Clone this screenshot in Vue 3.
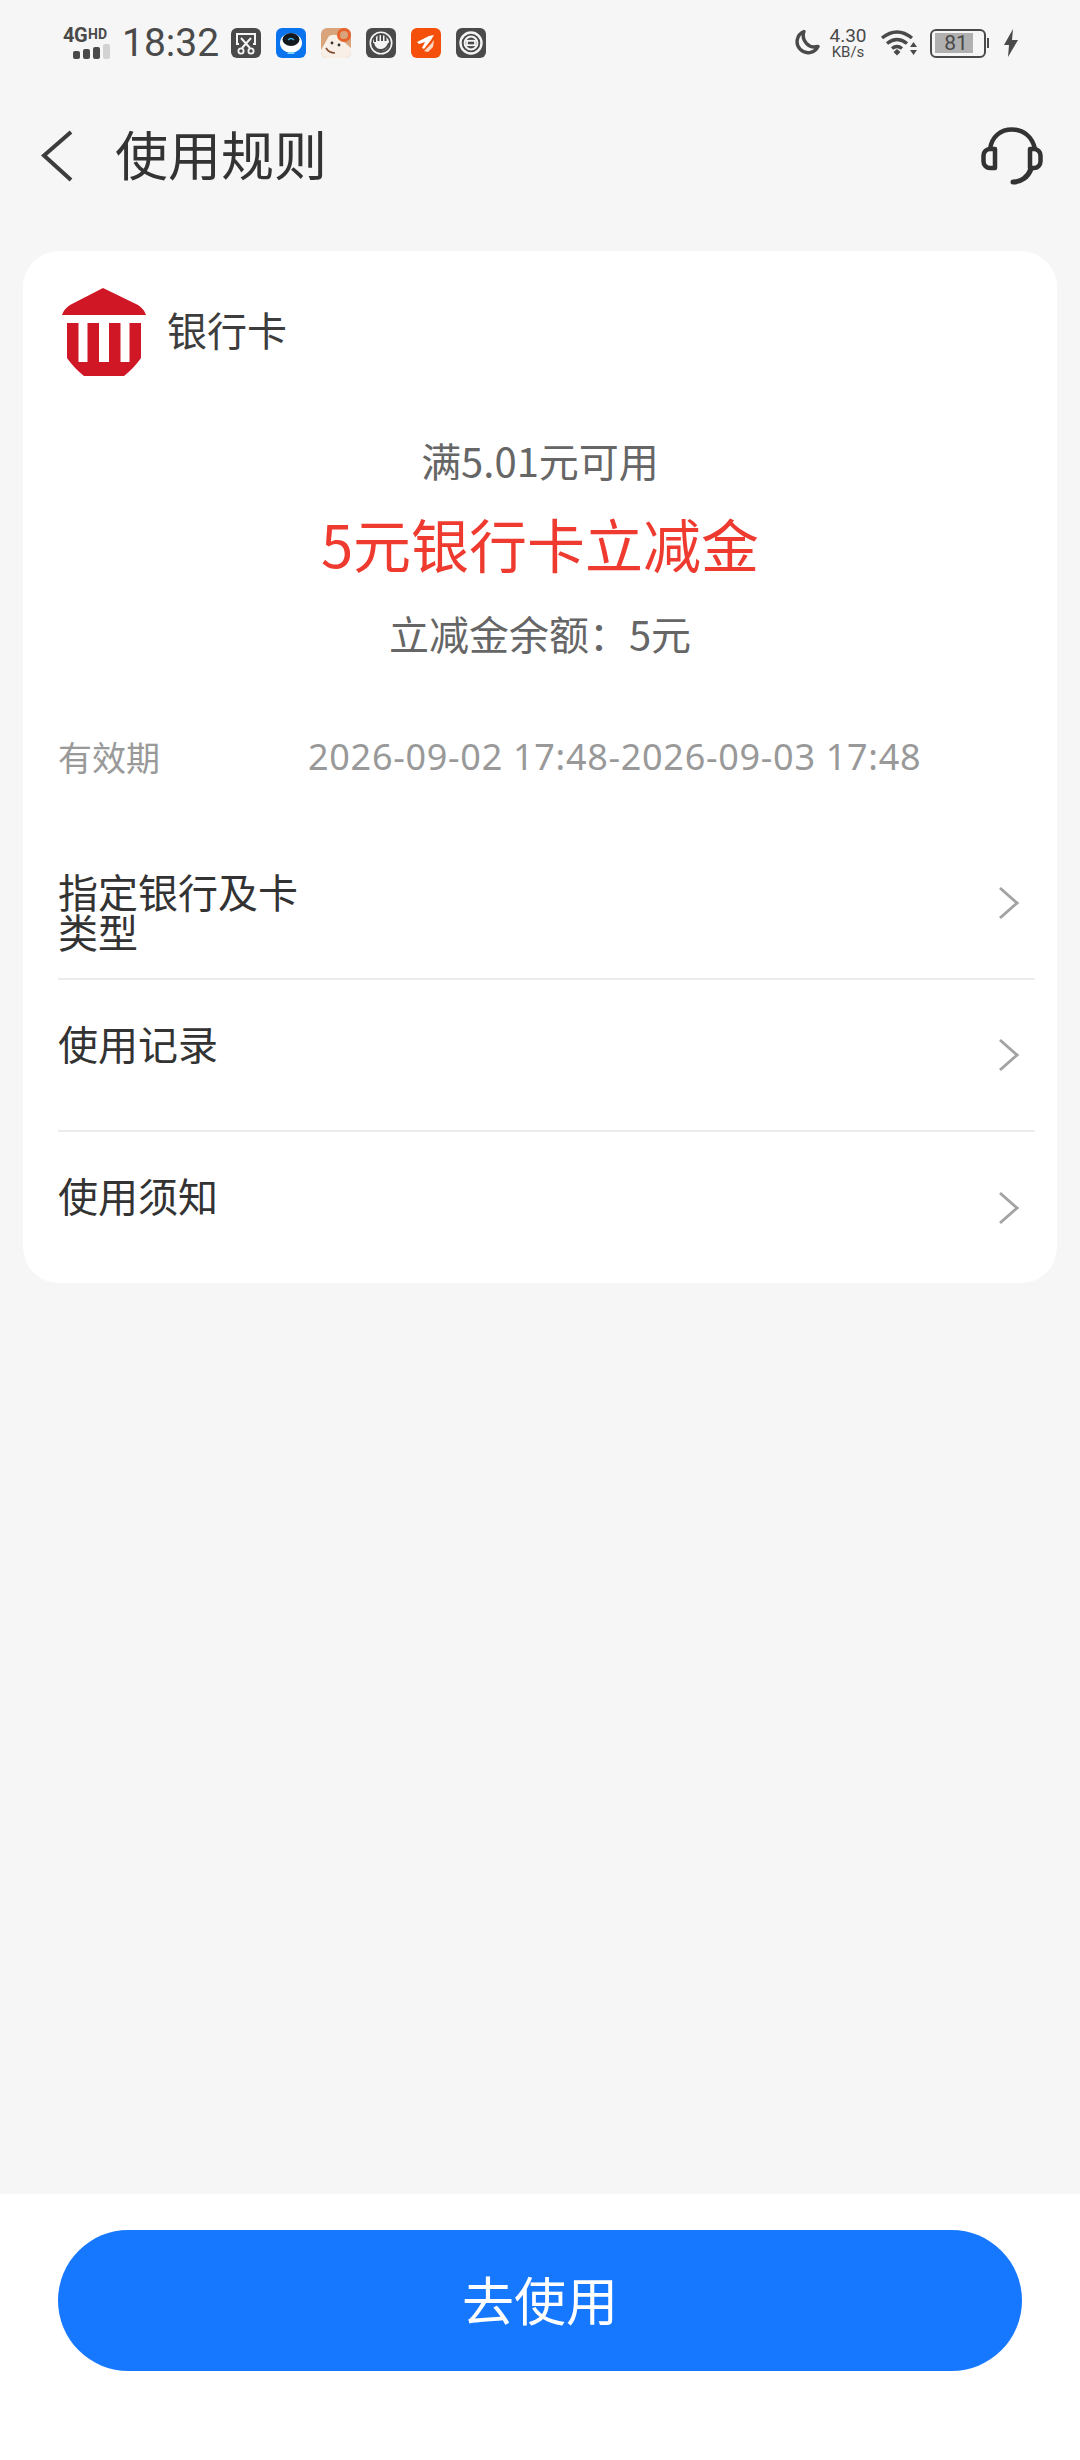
<script setup>
const rows = [
  { id: 1, label: '指定银行及卡类型' },
  { id: 2, label: '使用记录' },
  { id: 3, label: '使用须知' },
]
</script>

<template>
  <div class="page">
    <div class="status">
      <div class="status-left">
        <div class="net">
          <div class="net-top"><span class="g4">4G</span><span class="hd">HD</span></div>
          <div class="bars"><i class="b1"></i><i class="b2"></i><i class="b3"></i><i class="b4"></i></div>
        </div>
        <span class="time">18:32</span>
        <div class="apps">
          <svg class="app" viewBox="0 0 30 30">
            <rect width="30" height="30" rx="6" fill="#4a4a4a"/>
            <path d="M8 16H6V6h18v10h-2M10 10l9 10M20 10l-9 10" fill="none" stroke="#f5f5f5" stroke-width="2"/>
            <circle cx="10" cy="23" r="2.600" fill="none" stroke="#f5f5f5" stroke-width="1.800"/>
            <circle cx="20" cy="23" r="2.600" fill="none" stroke="#f5f5f5" stroke-width="1.800"/>
          </svg>
          <svg class="app" viewBox="0 0 30 30">
            <rect width="30" height="30" rx="6" fill="#0a74ee"/>
            <ellipse cx="15" cy="15" rx="11" ry="10" fill="#fff"/>
            <ellipse cx="15" cy="11.500" rx="8.500" ry="6.500" fill="#14181f"/>
            <path d="M12 12q3-3 6 0" fill="none" stroke="#3fb6e8" stroke-width="1.200"/>
            <path d="M11 26h8l-2-2h-4z" fill="#7fd4f5"/>
          </svg>
          <svg class="app" viewBox="0 0 30 30">
            <rect width="30" height="30" rx="6" fill="#d9a47c"/>
            <path d="M0 22L8 8q10-4 15 6l7 6v4a6 6 0 0 1-6 6H6a6 6 0 0 1-6-6z" fill="#f8efe6"/>
            <circle cx="23" cy="7" r="5.500" fill="none" stroke="#e8622c" stroke-width="3"/>
            <circle cx="11" cy="15" r="1.400" fill="#333"/>
            <circle cx="18" cy="17" r="1.400" fill="#333"/>
            <path d="M5 20q3 5 9 5" fill="none" stroke="#7d4a2c" stroke-width="1.600"/>
          </svg>
          <svg class="app" viewBox="0 0 30 30">
            <rect width="30" height="30" rx="6" fill="#4a4a4a"/>
            <circle cx="15" cy="15" r="11.500" fill="#f5f5f5"/>
            <circle cx="15" cy="15" r="9" fill="none" stroke="#4a4a4a" stroke-width="1.800"/>
            <path d="M9 14V9M12.500 13V6.500M16 13V6.500M19.500 13V8M7 15q2 8 9 7q5-1 7-7" fill="none" stroke="#4a4a4a" stroke-width="2"/>
          </svg>
          <svg class="app" viewBox="0 0 30 30">
            <rect width="30" height="30" rx="6" fill="#f4500c"/>
            <path d="M6 14l12-6 5-1-3 5-7 9-2-1 3-6-6 2z" fill="#fff"/>
            <path d="M13 23l7-7 3-4-1 7-5 5z" fill="#ffd9c7"/>
          </svg>
          <svg class="app" viewBox="0 0 30 30">
            <rect width="30" height="30" rx="6" fill="#4a4a4a"/>
            <circle cx="15" cy="15" r="10.500" fill="none" stroke="#f5f5f5" stroke-width="2.400"/>
            <circle cx="15" cy="15" r="6.400" fill="none" stroke="#f5f5f5" stroke-width="2"/>
            <rect x="11" y="12.800" width="8" height="4.400" fill="none" stroke="#f5f5f5" stroke-width="1.800"/>
          </svg>
        </div>
      </div>
      <div class="status-right">
        <svg class="moon" viewBox="0 0 28 28">
          <path d="M12 2.500a11 11 0 1 0 14 15a11.500 11.500 0 0 1-14-15z" fill="none" stroke="#4a4a4a" stroke-width="3.400" stroke-linejoin="round"/>
        </svg>
        <div class="speed"><span class="sp1">4.30</span><span class="sp2">KB/s</span></div>
        <svg class="wifi" viewBox="0 0 40 30">
          <path d="M2 10q15-12 30 0M7 15.500q10-8 20 0M12 20.500q5-4 10 0" fill="none" stroke="#4a4a4a" stroke-width="3.400"/>
          <path d="M13.500 24l3.500-3 3.500 3-3.500 3.500z" fill="#4a4a4a"/>
          <path d="M33.500 14l3.500 5h-7zM33.500 27l3.500-5h-7z" fill="#4a4a4a"/>
        </svg>
        <div class="battery">
          <div class="cell">
            <div class="fill"></div>
            <span class="level">81</span>
          </div>
          <i class="nub"></i>
        </div>
        <svg class="bolt" viewBox="0 0 14 28">
          <path d="M9 0L0 16h5l-1 12 10-17H8z" fill="#4a4a4a"/>
        </svg>
      </div>
    </div>

    <div class="nav">
      <svg class="back" viewBox="0 0 34 52">
        <path d="M31 2L4 25.500 31 50" fill="none" stroke="#3c3c3c" stroke-width="4"/>
      </svg>
      <span class="title">使用规则</span>
      <svg class="service" viewBox="0 0 62 58">
        <path d="M9 22C11 9 20 2.500 31 2.500S51 9 54 22" fill="none" stroke="#333" stroke-width="4.500"/>
        <path d="M14 22v19H9a6.500 6.500 0 0 1-6.500-6.500v-6A6.500 6.500 0 0 1 9 22zM49 22v19h4a6.500 6.500 0 0 0 6.500-6.500v-6A6.500 6.500 0 0 0 53 22z" fill="none" stroke="#333" stroke-width="4.500" stroke-linejoin="round"/>
        <path d="M50 42c-3 8-10 13-18 13" fill="none" stroke="#333" stroke-width="5" stroke-linecap="round"/>
      </svg>
    </div>

    <div class="card">
      <div class="card-head">
        <svg class="bank" viewBox="0 0 84 88">
          <path d="M41 0l35 17q6 4 8 10H0q2-6 8-10z" fill="#cf1726"/>
          <path d="M5 35h74v35q-7 10-17 18H22q-10-8-17-18z" fill="#cf1726"/>
          <rect x="16.500" y="35" width="9" height="39" fill="#fff"/>
          <rect x="37" y="35" width="10" height="39" fill="#fff"/>
          <rect x="58.500" y="35" width="9" height="39" fill="#fff"/>
        </svg>
        <span class="kind">银行卡</span>
      </div>
      <div class="summary">
        <div class="cond">满5.01元可用</div>
        <div class="amount">5元银行卡立减金</div>
        <div class="balance">立减金余额：5元</div>
      </div>
      <div class="validity">
        <span class="v-label">有效期</span>
        <span class="v-date">2026-09-02 17:48-2026-09-03 17:48</span>
      </div>
      <div class="rows">
        <div v-for="r in rows" :key="r.id" class="row">
          <span class="row-label">{{ r.label }}</span>
          <svg class="chev" viewBox="0 0 22 34">
            <path d="M2 2l17 15L2 32" fill="none" stroke="#a3a3a3" stroke-width="3"/>
          </svg>
        </div>
      </div>
    </div>

    <div class="spacer"></div>

    <div class="bottom">
      <button class="go">去使用</button>
    </div>
  </div>
</template>

<style scoped>
.page {
  width: 1080px;
  height: 2460px;
  display: flex;
  flex-direction: column;
  background: #f6f6f6;
  font-family: "Noto Sans CJK SC", "Noto Sans", sans-serif;
  overflow: hidden;
}
.status {
  height: 84px;
  padding: 2px 62px 0 63px;
  display: flex;
  align-items: center;
  justify-content: space-between;
  box-sizing: border-box;
  font-family: Roboto, "Noto Sans", sans-serif;
  color: #4a4a4a;
}
.status-left, .status-right { display: flex; align-items: center; }
.net { width: 47px; display: flex; flex-direction: column; align-items: flex-end; }
.net-top { display: flex; align-items: flex-start; width: 47px; height: 15px; line-height: 15px; font-weight: 700; }
.g4 { font-size: 20px; letter-spacing: -0.500px; }
.hd { font-size: 14px; line-height: 12px; margin-left: 1px; }
.bars { display: flex; align-items: flex-end; gap: 3px; height: 15px; margin-top: 1px; }
.bars i { display: block; width: 7px; background: #4a4a4a; border-radius: 2px; }
.b1 { height: 8px; } .b2 { height: 10px; } .b3 { height: 12px; }
.bars .b4 { height: 15px; background: #d2d2d2; }
.time { font-size: 39px; margin-left: 12px; width: 109px; line-height: 44px; }
.apps { display: flex; gap: 15px; }
.app { width: 30px; height: 30px; display: block; }
.moon { width: 28px; height: 28px; }
.speed { width: 40px; margin-left: 8px; display: flex; flex-direction: column; align-items: center; line-height: 1; }
.sp1 { font-size: 19px; }
.sp2 { font-size: 15px; }
.wifi { width: 40px; height: 30px; margin-left: 12px; }
.battery { margin-left: 10px; display: flex; align-items: center; }
.cell {
  position: relative;
  width: 56px;
  height: 29px;
  border: 2.500px solid #4a4a4a;
  border-radius: 6px;
  box-sizing: border-box;
  padding: 2.500px;
  display: flex;
}
.fill { width: 38px; background: #b0b0b0; }
.level {
  position: absolute;
  left: 11px;
  top: 0;
  width: 26px;
  text-align: center;
  font-size: 21px;
  line-height: 24px;
}
.nub { display: block; width: 2px; height: 10px; background: #4a4a4a; margin-left: 1px; }
.bolt { width: 14px; height: 28px; margin-left: 15px; }

.nav {
  height: 120px;
  padding: 0 37px 0 40px;
  display: flex;
  align-items: center;
  box-sizing: border-box;
  margin-top: 9px;
}
.back { width: 34px; height: 52px; margin-top: 6px; }
.title { margin-left: 41px; font-size: 53px; color: #333; line-height: 60px; }
.service { width: 62px; height: 58px; margin-left: auto; margin-top: 6px; }

.card {
  margin: 38px 23px 0;
  background: #fff;
  border-radius: 36px;
  padding: 37px 22px 0 35px;
  box-sizing: border-box;
}
.card-head { display: flex; align-items: center; margin-left: 4px; height: 88px; }
.bank { width: 84px; height: 88px; }
.kind { margin-left: 21px; font-size: 40px; color: #3d3d3d; line-height: 50px; margin-top: -6px; }
.summary { margin-top: 59px; text-align: center; margin-left: -35px; margin-right: -22px; }
.cond { font-size: 40px; color: #666; line-height: 50px; height: 50px; }
.amount { font-size: 58px; color: #ee3a2f; line-height: 72px; margin-top: 22px; }
.balance { font-size: 40px; color: #666; line-height: 50px; margin-top: 29px; }
.validity { display: flex; align-items: center; margin-top: 73px; height: 50px; }
.v-label { width: 250px; font-size: 34px; color: #999; }
.v-date { font-size: 36px; color: #999; letter-spacing: 0.700px; font-family: "Noto Sans", sans-serif; }
.rows { margin-top: 47px; }
.row {
  height: 152px;
  display: flex;
  align-items: center;
  justify-content: space-between;
  box-sizing: border-box;
  border-bottom: 2px solid #ececec;
  padding-right: 15px;
}
.row:last-child { border-bottom: 0; height: 151px; }
.row-label { align-self: flex-start; margin-top: 43px; width: 250px; font-size: 40px; line-height: 40px; color: #333; }
.chev { width: 22px; height: 34px; }
.spacer { flex: 1; }
.bottom {
  height: 266px;
  background: #fff;
  padding: 36px 58px 0;
  box-sizing: border-box;
}
.go {
  display: block;
  width: 100%;
  height: 141px;
  border: 0;
  border-radius: 71px;
  background: #1677ff;
  color: #fff;
  font-family: inherit;
  font-size: 52px;
  padding: 0 0 5px;
}
</style>
